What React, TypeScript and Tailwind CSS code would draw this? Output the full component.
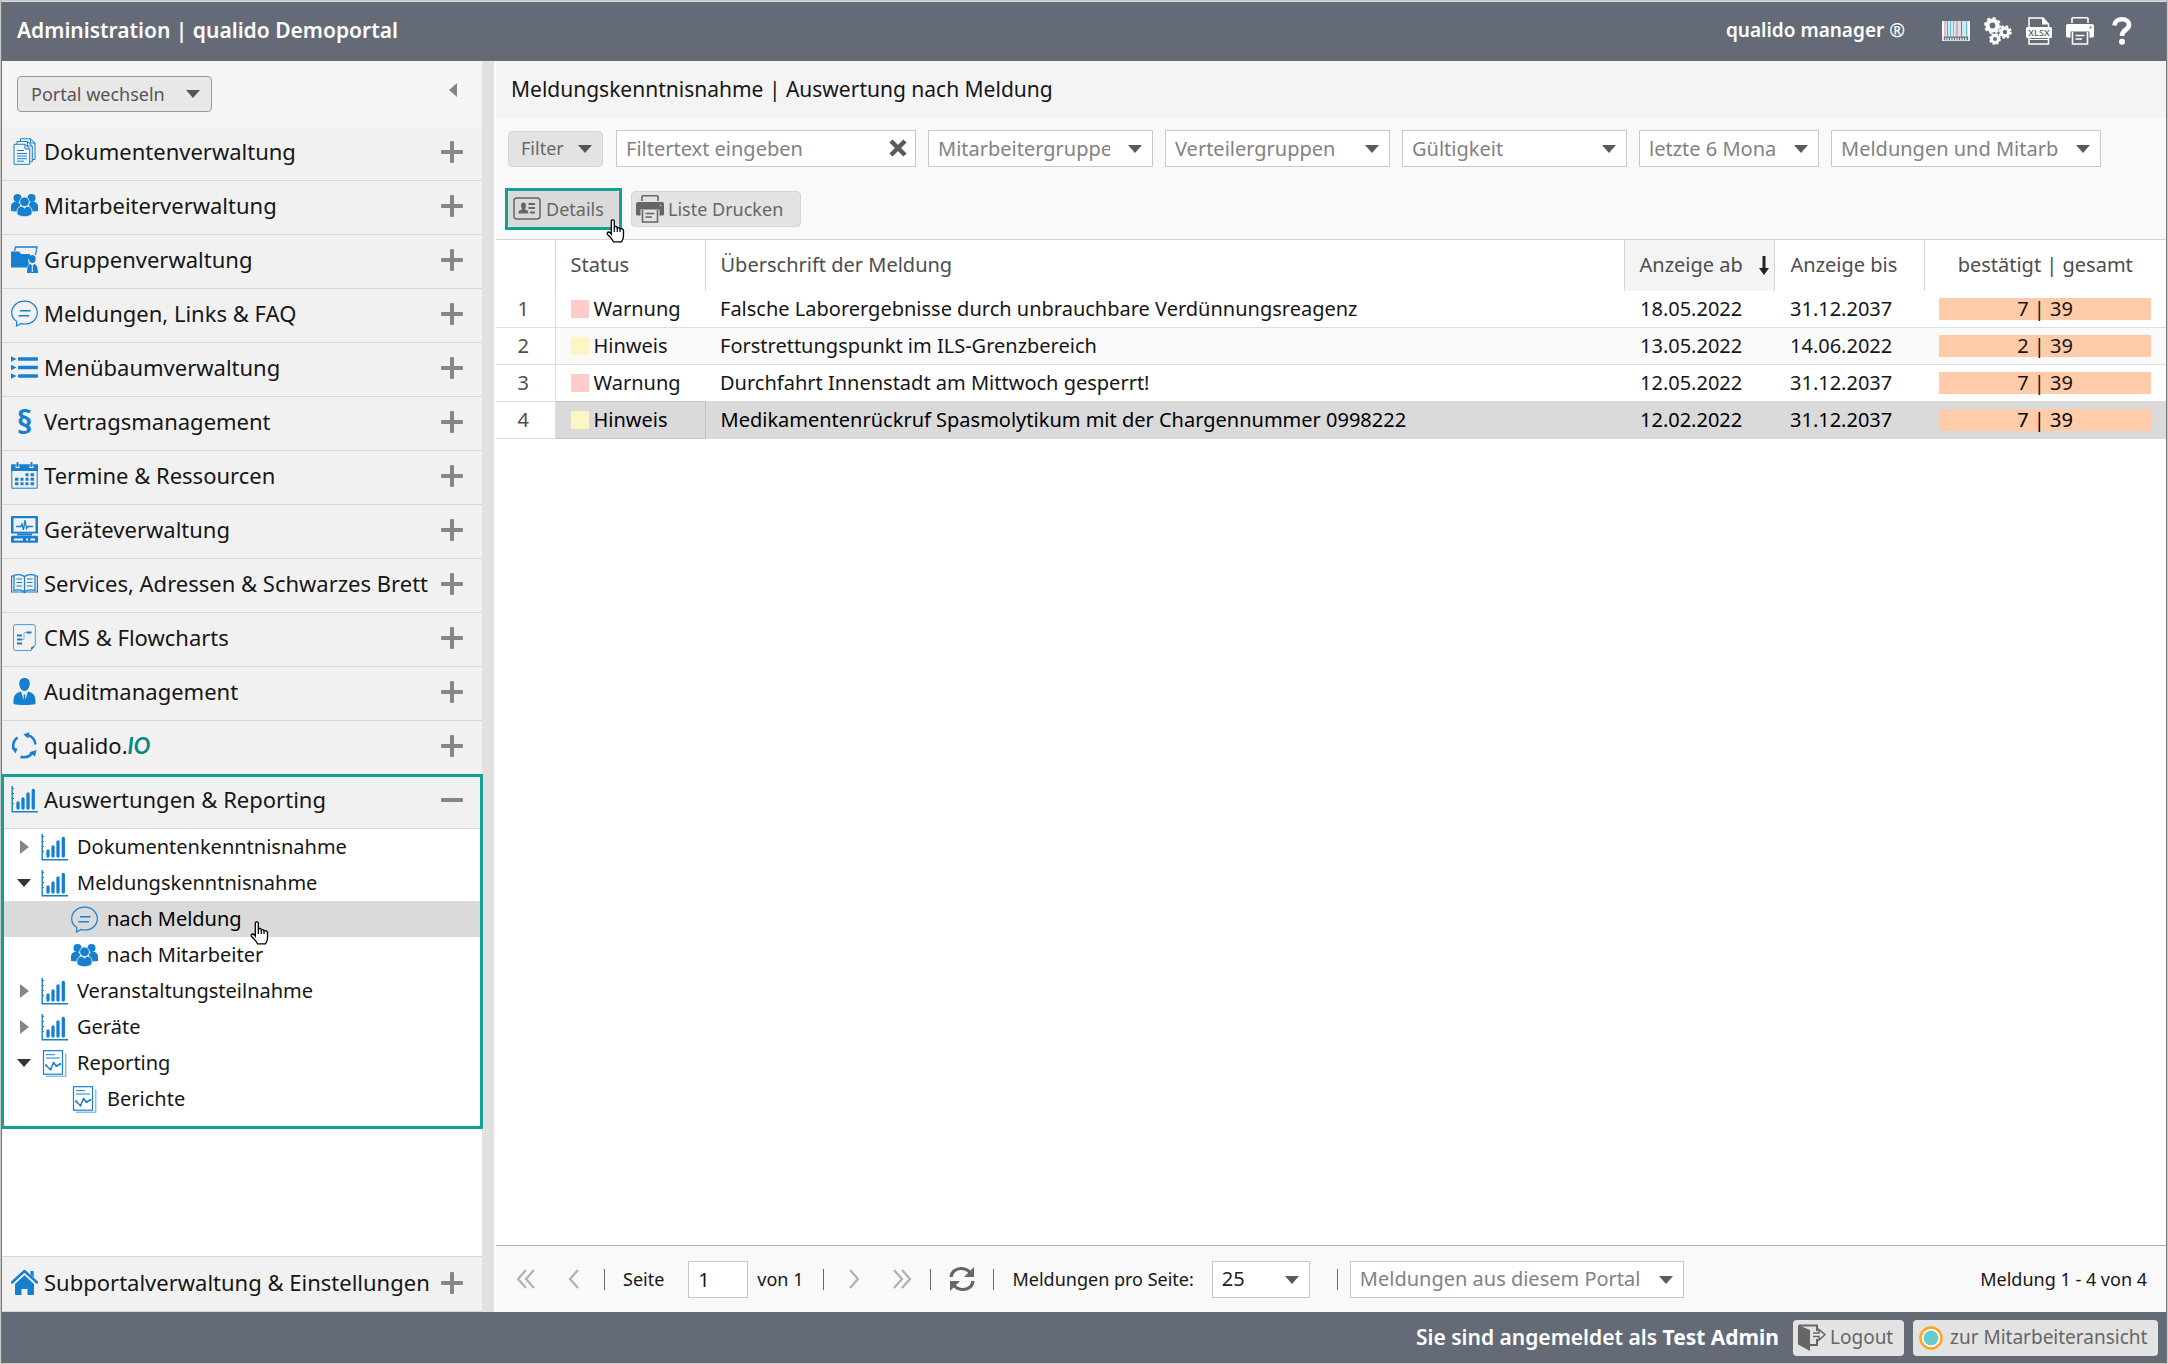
import React from 'react';

interface IconProps {
  className?: string
}

interface MenuEntry {
  label: React.ReactNode
  icon: React.ReactNode
}

interface TreeEntry {
  label: string
  icon: React.ReactNode
  state?: 'open' | 'closed'
  child?: boolean
  active?: boolean
}

const BLUE = '#177fd0'

function Svg({ children, size = 27 }: { children: React.ReactNode, size?: number }) {
  return (
    <svg width={size} height={size} viewBox="0 0 27 27" fill="none" stroke={BLUE} strokeWidth="1" className="shrink-0" aria-hidden="true">
      {children}
    </svg>
  )
}

function DocsIcon() {
  return (
    <Svg>
      <path d="M9.500 3.500V.800H19.500L24 5V21.500H21.500" />
      <path d="M6 6V3.500H16.500L21.300 8V23.700H19" />
      <path d="M19.500.800V5H24M16.500 3.500V8H21" />
      <path d="M3 6.300H14L18.700 11V26.300H3Z" fill="#f1f7fd" />
      <path d="M14 6.300V11H18.700M6 12.500H13M6 15.500H16M6 18H16M6 20.700H16M6 23.200H13" />
    </Svg>
  )
}

function UsersIcon() {
  return (
    <Svg>
      <g fill={BLUE} stroke="none">
        <circle cx="6.500" cy="6" r="4" />
        <circle cx="20.500" cy="6" r="4" />
        <path d="M0 19V14.500C0 11.500 2.500 9.800 5 9.800C7.500 9.800 8.500 11 9 12L8 19.800Z" />
        <path d="M27 19V14.500C27 11.500 24.500 9.800 22 9.800C19.500 9.800 18.500 11 18 12L19 19.800Z" />
      </g>
      <circle cx="13.500" cy="9.800" r="4.800" fill={BLUE} stroke="#f1f1f1" strokeWidth=".8" />
      <path d="M6 22V19C6 15.300 9.500 14.200 11 14.200L13.500 16L16 14.200C17.500 14.200 21 15.300 21 19V22C18 25.600 9 25.600 6 22Z" fill={BLUE} stroke="#f1f1f1" strokeWidth=".8" />
    </Svg>
  )
}

function GroupIcon() {
  return (
    <Svg>
      <path d="M3.500 5L4.500 1H26L24.500 9" strokeWidth="1.300" />
      <path d="M0 5.500H8L10 8H19V12L17 14L18 18L16 21.500H0Z" fill={BLUE} stroke="none" />
      <ellipse cx="21.300" cy="13" rx="3.300" ry="4" fill={BLUE} stroke="none" />
      <path d="M16 27C16 21 17.500 18.500 19.500 18L21.300 20L23.300 18C25.500 18.500 27 21 27 27Z" fill={BLUE} stroke="none" />
      <path d="M21.300 19.500V26" stroke="#f1f1f1" />
    </Svg>
  )
}

function SpeechIcon() {
  return (
    <Svg>
      <path d="M5.500 26L5.800 21.500C2.500 19.500.700 16.500.700 12.800C.700 6 6.300 1.200 13.500 1.200S26.300 6 26.300 12.800S20.500 24 13.500 24C12.300 24 11.200 23.800 10.200 23.500Z" strokeWidth="1.200" />
      <path d="M9 10.700H19.500M7.500 15.700H18" strokeWidth="1.500" />
    </Svg>
  )
}

function ListIcon() {
  return (
    <Svg>
      <g fill={BLUE} stroke="none">
        <path d="M0 2.300L5.500 5L0 7.700ZM0 10.800L5.500 13.500L0 16.200ZM0 19.300L5.500 22L0 24.700Z" />
        <rect x="7" y="3.300" width="20" height="3.400" rx="1" />
        <rect x="7" y="11.800" width="20" height="3.400" rx="1" />
        <rect x="7" y="20.300" width="20" height="3.400" rx="1" />
      </g>
    </Svg>
  )
}

function ParagraphIcon() {
  return <span className="w-[27px] shrink-0 text-center text-[32px] leading-[27px] font-bold text-[#177fd0]" aria-hidden="true">§</span>
}

function CalendarIcon() {
  return (
    <Svg>
      <path d="M.800 3H26.200V26.200H.800Z" />
      <path d="M0 2.500H4.500V6H8.500V2.500H18.500V6H22.500V2.500H27V9H0Z" fill={BLUE} stroke="none" />
      <path d="M6.500 0V5M20.500 0V5" strokeWidth="1.800" />
      <path d="M14.500 12.700H17.500M19.500 12.700H23M4 17.200H7.500M9.500 17.200H12.500M14.500 17.200H17.500M19.500 17.200H23M4 21.700H7.500M9.500 21.700H12.500M14.500 21.700H17.500M19.500 21.700H23" strokeWidth="3" />
    </Svg>
  )
}

function DeviceIcon() {
  return (
    <Svg>
      <path d="M0 1Q0 0 1 0H26Q27 0 27 1V17.500H0Z" fill={BLUE} stroke="none" />
      <rect x="2.500" y="2.200" width="22" height="13.500" fill="#f1f1f1" stroke="none" />
      <path d="M5 10.500H9.500L11 8L12.500 14L14 4L15.500 12.500L17 10.500H22" strokeWidth="1.300" />
      <path d="M6 18.500H21" strokeWidth="2" />
      <rect x="0" y="19.800" width="27" height="7" rx="1" fill={BLUE} stroke="none" />
      <path d="M3 23.500H12M15 23.500H17M19.500 23.500H24" stroke="#f1f1f1" strokeWidth="2" />
    </Svg>
  )
}

function BookIcon() {
  return (
    <Svg>
      <path d="M3 6H.600V22H12L13.500 22.500L15 22H26.400V6H24" strokeWidth="1.200" />
      <path d="M13.500 6.500C10.500 4.200 6.500 4.200 3 5.200V20.500C6.500 19.500 10.500 19.800 13.500 21.500C16.500 19.800 20.500 19.500 24 20.500V5.200C20.500 4.200 16.500 4.200 13.500 6.500ZM13.500 6.500V21.500" strokeWidth="1.200" />
      <path d="M5.500 9H11M5.500 12.500H11M5.500 16H11M16 9H21.500M16 12.500H21.500M16 16H21.500" />
    </Svg>
  )
}

function FlowIcon() {
  return (
    <Svg>
      <path d="M24.300 21V2.500Q24.300.600 22 .600H4.500Q2.500.600 2.500 2.500V24.500Q2.500 26.500 4.500 26.500H20Z" strokeOpacity=".75" />
      <path d="M20 26.500V24Q20 22.500 22 22.500L24.300 21Z" fill={BLUE} stroke="none" />
      <path d="M6 11.500H11M6 15.500H11M6 19.500H11M15.500 8.500H20.500" strokeWidth="1.800" />
      <path d="M11 15.500H13V8.500H15.500" strokeOpacity=".5" />
    </Svg>
  )
}

function AuditIcon() {
  return (
    <Svg>
      <path d="M8.300 5.500C8.300 1.500 10.500 0 13.500 0S18.700 1.500 18.700 5.500C18.700 9 17 13 13.500 13S8.300 9 8.300 5.500Z" fill={BLUE} stroke="none" />
      <path d="M2.500 26C2.500 19 2.500 16 9.500 13.500L13.500 17L17.500 13.500C24.500 16 24.500 19 24.500 26C20 27.300 7 27.300 2.500 26Z" fill={BLUE} stroke="none" />
      <path d="M10.200 14L13.500 25L16.800 14L13.500 16.500Z" fill="#f1f1f1" stroke="none" />
      <path d="M12.500 16.500H14.500L14.200 18.500L15 23L13.500 25L12 23L12.800 18.500Z" fill={BLUE} stroke="none" />
    </Svg>
  )
}

function CycleIcon() {
  return (
    <Svg>
      <path d="M6.500 5.500C3 8 1.500 11.500 2.500 17M16 3C20.500 4 24 7.500 24.500 12.500M22 20C19 24.500 14 26 9.500 24.700" strokeWidth="2.600" />
      <path d="M.300 15.500L6.500 16.500L4.500 21.500ZM18.500.300L17 6.500L12.300 2.300ZM18.500 20.500L25.500 18L24 24.500Z" fill={BLUE} stroke="none" />
    </Svg>
  )
}

function ChartIcon() {
  return (
    <Svg>
      <path d="M1.200 0V25.800H27" strokeWidth="1.400" />
      <path d="M1.500 2.500H3M1.500 7.500H3M1.500 12.500H3M1.500 17.500H3" />
      <path d="M7 17V22M12 13V22M17 8V22M22.300 4.500V22" strokeWidth="3.300" strokeLinecap="round" />
    </Svg>
  )
}

function ReportIcon() {
  return (
    <Svg>
      <path d="M24.700 3.500V26.300H5" strokeOpacity=".5" strokeWidth="1.500" />
      <rect x="2.500" y=".700" width="19" height="23.500" fill="#fff" strokeWidth="1.200" />
      <path d="M5 4.700H14M5 8H19" />
      <path d="M5 15.500L9.500 19.500L12.500 12.800L15.500 16L19.500 14" strokeWidth="1.500" />
      <path d="M4.200 15.200H6.200M8.500 19.200H10.500M11.700 13.200H13.700M14.500 15.800H16.500M18 14H20" strokeWidth="2" />
    </Svg>
  )
}

function HomeIcon() {
  return (
    <Svg>
      <path d="M1 13.500L13.500 2L26 13.500" strokeWidth="2.400" strokeLinecap="round" strokeLinejoin="round" />
      <path d="M19.500 2H22.700V8.500L19.500 5.700Z" fill={BLUE} stroke="none" />
      <path d="M13.500 6.300L23 15V25Q23 26 22 26H16.500V20H10.500V26H5Q4 26 4 25V15Z" fill={BLUE} stroke="none" />
    </Svg>
  )
}

function BarcodeIcon() {
  return (
    <svg width="28" height="20" viewBox="0 0 28 20" stroke="#fff" aria-hidden="true">
      <rect x="0" y="0" width="28" height="15.500" fill="#fff" fillOpacity=".8" stroke="none" />
      <path d="M1 0V20M27 0V20" strokeWidth="1.600" />
      <path d="M5.500 0V15.500M15 0V15.500" stroke="#9a8f9a" />
      <path d="M3 0V15.500M11.500 0V15.500" stroke="#c9a4a4" />
      <path d="M8.500 0V15.500M24.500 0V15.500" stroke="#5cc3e0" />
      <path d="M19.500 0V15.500" stroke="#a35cc8" />
      <path d="M3 18H25" strokeWidth="2.600" strokeDasharray="1.500 1" strokeOpacity=".8" />
      <path d="M1 19.500H27" strokeOpacity=".7" />
    </svg>
  )
}

function GearsIcon() {
  return (
    <svg width="28" height="28" viewBox="0 0 28 28" fill="none" stroke="#fff" aria-hidden="true">
      <circle cx="8.500" cy="8.500" r="5" strokeWidth="4.200" />
      <circle cx="8.500" cy="8.500" r="7.400" strokeWidth="2.200" strokeDasharray="3 2.811" />
      <circle cx="21" cy="15" r="3.800" strokeWidth="3.200" />
      <circle cx="21" cy="15" r="5.800" strokeWidth="2" strokeDasharray="2.500 2.055" />
      <circle cx="11" cy="22" r="3.400" strokeWidth="3" />
      <circle cx="11" cy="22" r="5" strokeWidth="1.800" strokeDasharray="2.200 1.727" />
    </svg>
  )
}

function XlsxIcon() {
  return (
    <svg width="26" height="28" viewBox="0 0 26 28" fill="none" stroke="#fff" aria-hidden="true">
      <path d="M3 11V1H17L22.500 7V11M3 19V27H22.500V19" strokeWidth="1.500" />
      <path d="M16 0L23 7.500H16Z" fill="#fff" stroke="none" />
      <rect x="0" y="10" width="26" height="11" rx="1.500" fill="#fff" stroke="none" />
      <path d="M4 22.500H22" strokeWidth="1" />
      <text x="13" y="18.800" textAnchor="middle" fontSize="9" fontWeight="600" fill="#646b77" stroke="none">XLSX</text>
    </svg>
  )
}

function PrinterIcon({ className }: IconProps) {
  return (
    <svg width="28" height="28" viewBox="0 0 28 28" fill="none" stroke="currentColor" className={className} aria-hidden="true">
      <path d="M6 6V1.500Q6 .800 7 .800H21Q22 .800 22 1.500V6" strokeWidth="1.600" />
      <path d="M2 7H26Q28 7 28 9V19Q28 20.500 26.500 20.500H23.500V14.500H4.500V20.500H1.500Q0 20.500 0 19V9Q0 7 2 7Z" fill="currentColor" stroke="none" />
      <path d="M6.500 15V27H21.500V15" strokeWidth="1.600" />
      <path d="M9.500 18.500H18.500M9.500 22H16" strokeWidth="1.600" />
      <circle cx="24.500" cy="10.500" r="1.200" fill="#999" stroke="none" />
    </svg>
  )
}

function CardIcon() {
  return (
    <svg width="28" height="24" viewBox="0 0 28 24" fill="none" stroke="#666" aria-hidden="true">
      <rect x="1" y="1" width="26" height="21" rx="3" strokeWidth="1.500" />
      <path d="M8 8.500C8 6.500 9 5.500 10.500 5.500S13 6.500 13 8.500C13 10.500 12 11 12 12.500C14 13 15.500 13.500 15.500 16.500H5.500C5.500 13.500 7 13 9 12.500C9 11 8 10.500 8 8.500Z" fill="#666" stroke="none" />
      <path d="M15.500 7H22M15.500 11H22M17 15.500H22" strokeWidth="2" />
    </svg>
  )
}

function LogoutIcon() {
  return (
    <svg width="28" height="28" viewBox="0 0 28 28" fill="none" stroke="#666" aria-hidden="true">
      <path d="M0 1L12 6V27L0 20.500Z" fill="#666" stroke="none" />
      <path d="M1 1.500H19V7M12 21H19V15" strokeWidth="2" />
      <path d="M15 9H21V5.500L27 10.700L21 16V12.500H15" strokeWidth="1.500" />
    </svg>
  )
}

function RefreshIcon() {
  return (
    <svg width="26" height="26" viewBox="0 0 26 26" fill="none" stroke="#666" aria-hidden="true">
      <path d="M2 11C2.500 5.500 7 2.500 12 2.500C16 2.500 19 4 21.500 7M24 15C23.500 20.500 19 23.500 14 23.500C10 23.500 7 22 4.500 19" strokeWidth="3.200" />
      <path d="M25 1V11H15ZM1 25V15H11Z" fill="#666" stroke="none" />
    </svg>
  )
}

function HandCursor({ className }: IconProps) {
  return (
    <svg width="19" height="24" viewBox="0 0 19 24" className={className} aria-hidden="true">
      <path d="M6 1Q8 .500 8.300 2V9L9 7.500Q11 7 11.300 9Q13.500 8 14 10Q17 9 17.500 11.500V17Q17.500 20 15.500 22.800H7.500Q6 19.500 1.500 15.500Q.500 13.500 2.500 13Q4 13 5.300 15V2Q5.300 1.200 6 1Z" fill="#fff" stroke="#000" strokeWidth="1.300" />
      <path d="M8.300 9V13M11.300 9V13M14 10V13" stroke="#000" strokeWidth="1.200" />
    </svg>
  )
}

function Caret({ className }: IconProps) {
  return (
    <svg width="14" height="8" viewBox="0 0 14 8" className={className} aria-hidden="true">
      <path d="M0 0H14L7 8Z" fill="currentColor" />
    </svg>
  )
}

const menu: Array<MenuEntry> = [
  { label: 'Dokumentenverwaltung', icon: <DocsIcon /> },
  { label: 'Mitarbeiterverwaltung', icon: <UsersIcon /> },
  { label: 'Gruppenverwaltung', icon: <GroupIcon /> },
  { label: 'Meldungen, Links & FAQ', icon: <SpeechIcon /> },
  { label: 'Menübaumverwaltung', icon: <ListIcon /> },
  { label: 'Vertragsmanagement', icon: <ParagraphIcon /> },
  { label: 'Termine & Ressourcen', icon: <CalendarIcon /> },
  { label: 'Geräteverwaltung', icon: <DeviceIcon /> },
  { label: 'Services, Adressen & Schwarzes Brett', icon: <BookIcon /> },
  { label: 'CMS & Flowcharts', icon: <FlowIcon /> },
  { label: 'Auditmanagement', icon: <AuditIcon /> },
  { label: <>qualido.<span className="font-[Lato] font-bold text-[#088683] italic">IO</span></>, icon: <CycleIcon /> },
]

const tree: Array<TreeEntry> = [
  { label: 'Dokumentenkenntnisnahme', icon: <ChartIcon />, state: 'closed' },
  { label: 'Meldungskenntnisnahme', icon: <ChartIcon />, state: 'open' },
  { label: 'nach Meldung', icon: <SpeechIcon />, child: true, active: true },
  { label: 'nach Mitarbeiter', icon: <UsersIcon />, child: true },
  { label: 'Veranstaltungsteilnahme', icon: <ChartIcon />, state: 'closed' },
  { label: 'Geräte', icon: <ChartIcon />, state: 'closed' },
  { label: 'Reporting', icon: <ReportIcon />, state: 'open' },
  { label: 'Berichte', icon: <ReportIcon />, child: true },
]

const rows = [
  { status: 'Warnung', title: 'Falsche Laborergebnisse durch unbrauchbare Verdünnungsreagenz', from: '18.05.2022', to: '31.12.2037', count: '7 | 39' },
  { status: 'Hinweis', title: 'Forstrettungspunkt im ILS-Grenzbereich', from: '13.05.2022', to: '14.06.2022', count: '2 | 39' },
  { status: 'Warnung', title: 'Durchfahrt Innenstadt am Mittwoch gesperrt!', from: '12.05.2022', to: '31.12.2037', count: '7 | 39' },
  { status: 'Hinweis', title: 'Medikamentenrückruf Spasmolytikum mit der Chargennummer 0998222', from: '12.02.2022', to: '31.12.2037', count: '7 | 39', selected: true },
]

function MenuRow({ label, icon, open }: MenuEntry & { open?: boolean }) {
  return (
    <button className="flex h-[54px] w-full items-center border-b border-[#d8d8d8] bg-[#f1f1f1] pr-[19px] pb-1 pl-[9px] text-left text-[22px] text-[#161616]">
      {icon}
      <span className="ml-[6px] flex-1 whitespace-nowrap">{label}</span>
      <svg width="22" height="22" viewBox="0 0 22 22" fill="#868686" aria-hidden="true">
        <rect x="0" y="9" width="22" height="4" rx="1" />
        {!open && <rect x="9" y="0" width="4" height="22" rx="1" />}
      </svg>
    </button>
  )
}

function TreeRow({ label, icon, state, child, active }: TreeEntry) {
  return (
    <li className={active ? 'relative bg-[#dadada]' : ''}>
      <button className={`flex h-9 w-full items-center text-left text-[20px] ${active ? 'text-black' : 'text-[#161616]'} ${child ? 'pl-[69px]' : 'pl-[15px]'}`}>
        {!child && (
          <span className="flex w-6 shrink-0">
            {state === 'open'
              ? <Caret className="text-[#333]" />
              : <svg width="9" height="14" viewBox="0 0 9 14" className="ml-[3px]" aria-hidden="true"><path d="M0 0L9 7L0 14Z" fill="#868686" /></svg>}
          </span>
        )}
        {icon}
        <span className="ml-[9px] whitespace-nowrap">{label}</span>
      </button>
      {active && <HandCursor className="absolute top-5 left-[248px]" />}
    </li>
  )
}

function Sidebar() {
  return (
    <aside className="flex w-[480px] shrink-0 flex-col bg-white">
      <div className="flex h-[66px] items-start justify-between bg-[#f5f5f5] pt-[15px] pr-[25px] pl-[15px]">
        <button className="flex h-9 w-[195px] items-center justify-between rounded-[4px] border border-[#999] bg-[#e8e8e8] pr-[11px] pl-[13px] text-[18px] text-[#555]">
          Portal wechseln
          <Caret />
        </button>
        <button aria-label="Menü einklappen" className="mt-[7px]">
          <svg width="8" height="14" viewBox="0 0 8 14" aria-hidden="true"><path d="M8 0V14L0 7Z" fill="#868686" /></svg>
        </button>
      </div>
      <nav>
        {menu.map((m, i) => <MenuRow key={i} {...m} />)}
        <section className="relative z-10 pb-[11px]">
          <MenuRow label="Auswertungen & Reporting" icon={<ChartIcon />} open />
          <ul>
            {tree.map((t, i) => <TreeRow key={i} {...t} />)}
          </ul>
          <div className="pointer-events-none absolute -inset-px border-3 border-[#12a090]"></div>
        </section>
      </nav>
      <div className="mt-auto border-t border-[#d8d8d8] bg-[#f1f1f1] pt-px">
        <MenuRow label="Subportalverwaltung & Einstellungen" icon={<HomeIcon />} />
      </div>
    </aside>
  )
}

interface DropdownProps {
  label: string
  value: string
  width: string
  dark?: boolean
}

function Dropdown({ label, value, width, dark }: DropdownProps) {
  return (
    <div className={`relative shrink-0 ${width}`}>
      <select aria-label={label} className={`h-[37px] w-full appearance-none border border-[#c8c8c8] bg-white pr-[42px] pl-[9px] text-[20px] ${dark ? 'text-[#222]' : 'text-[#828282]'}`}>
        <option>{value}</option>
      </select>
      <Caret className="pointer-events-none absolute top-[15px] right-[11px] text-[#5a5a5a]" />
    </div>
  )
}

function Toolbar() {
  return (
    <div className="bg-[#f9f9f9] px-3 pt-3">
      <div className="flex items-center gap-3">
        <button className="flex h-9 w-[95px] items-center justify-between rounded-[4px] border border-[#d5d5d5] bg-[#e3e3e3] pr-[10px] pl-3 text-[18px] text-[#666]">
          Filter
          <Caret className="text-[#555]" />
        </button>
        <div className="relative ml-px w-[300px] shrink-0">
          <input aria-label="Filtertext" placeholder="Filtertext eingeben" className="h-[37px] w-full border border-[#c8c8c8] bg-white pr-10 pl-[9px] text-[20px] placeholder:text-[#828282]" />
          <button aria-label="Filtertext löschen" className="absolute top-[9px] right-[9px]">
            <svg width="18" height="18" viewBox="0 0 18 18" stroke="#5a5a5a" strokeWidth="4.500" aria-hidden="true"><path d="M2 2L16 16M16 2L2 16" /></svg>
          </button>
        </div>
        <Dropdown label="Mitarbeitergruppen" value="Mitarbeitergruppen" width="w-[225px]" />
        <Dropdown label="Verteilergruppen" value="Verteilergruppen" width="w-[225px]" />
        <Dropdown label="Gültigkeit" value="Gültigkeit" width="w-[225px]" />
        <Dropdown label="Zeitraum" value="letzte 6 Monate" width="w-[180px]" />
        <Dropdown label="Umfang" value="Meldungen und Mitarbeiter" width="w-[270px]" />
      </div>
      <div className="flex gap-3 pt-6 pb-3">
        <div className="relative outline-3 outline-[#12a090]">
          <button className="flex h-9 w-[111px] items-center gap-[5px] rounded-[4px] bg-[#dadada] pl-[5px] text-[18px] text-[#666]">
            <CardIcon />
            Details
          </button>
          <HandCursor className="absolute top-7 right-[-6px]" />
        </div>
        <button className="flex h-9 w-[170px] items-center gap-1 rounded-[4px] border border-[#d5d5d5] bg-[#e3e3e3] pl-1 text-[18px] text-[#666]">
          <PrinterIcon />
          Liste Drucken
        </button>
      </div>
    </div>
  )
}

function MessageTable() {
  return (
    <table className="w-full table-fixed border-collapse border-t border-[#d5d5d5] text-left text-[20px] text-[#161616]">
      <colgroup>
        <col className="w-[59px]" />
        <col className="w-[150px]" />
        <col />
        <col className="w-[150px]" />
        <col className="w-[150px]" />
        <col className="w-[242px]" />
      </colgroup>
      <thead className="text-[#4d4d4d]">
        <tr className="h-[51px]">
          <th className="border-r border-[#d5d5d5]" aria-label="Nummer"></th>
          <th className="border-r border-[#d5d5d5] pl-[15px] font-normal">Status</th>
          <th className="border-r border-[#d5d5d5] pl-[15px] font-normal">Überschrift der Meldung</th>
          <th className="border-r border-[#d5d5d5] bg-[#f4f4f4] pl-[15px] font-normal">
            <span className="flex items-center justify-between pr-[5px] whitespace-nowrap">
              Anzeige ab
              <svg width="10" height="19" viewBox="0 0 10 19" aria-hidden="true"><path d="M3.500 0H6.500V12H10L5 19L0 12H3.500Z" fill="#222" /></svg>
            </span>
          </th>
          <th className="border-r border-[#d5d5d5] pl-4 font-normal">Anzeige bis</th>
          <th className="text-center font-normal">bestätigt | gesamt</th>
        </tr>
      </thead>
      <tbody className="leading-7">
        {rows.map((r, i) => (
          <tr key={i} className={`h-[37px] border-b border-[#dedede] ${r.selected ? 'bg-[#dadada] text-black' : i % 2 ? 'bg-[#fafafa]' : 'bg-white'}`}>
            <td className="border-r border-[#dedede] bg-white pr-1 text-center text-[#4d4d4d]">{i + 1}</td>
            <td className={r.selected ? 'border border-[#c2c2c2] pl-[15px]' : 'pl-[15px]'}>
              <span className="flex items-center gap-[5px]">
                <span className={`h-[18px] w-[18px] ${r.status === 'Warnung' ? 'bg-[#ffcccc]' : 'bg-[#fbf6c4]'}`}></span>
                {r.status}
              </span>
            </td>
            <td className="truncate pl-[15px]">{r.title}</td>
            <td className="pl-4">{r.from}</td>
            <td className="pl-4">{r.to}</td>
            <td className="px-[15px]">
              <div className="h-[22px] bg-[#ffcba8] text-center leading-[22px]">{r.count}</div>
            </td>
          </tr>
        ))}
      </tbody>
    </table>
  )
}

function Separator() {
  return <span className="h-[21px] w-px shrink-0 bg-[#666]"></span>
}

function PageButton({ label, path }: { label: string, path: string }) {
  return (
    <button aria-label={label} className="flex w-5 justify-center">
      <svg width="20" height="20" viewBox="0 0 20 20" fill="none" stroke="#b0b0b0" strokeWidth="2.200" aria-hidden="true">
        <path d={path} />
      </svg>
    </button>
  )
}

function Pager() {
  return (
    <div className="mt-auto flex h-[67px] items-center border-t border-[#b0b0b0] bg-[#f9f9f9] pr-[19px] pl-5 text-[18px] whitespace-nowrap text-[#161616]">
      <div className="flex items-center gap-7">
        <PageButton label="Erste Seite" path="M10 1L2 10L10 19M18 1L10 10L18 19" />
        <PageButton label="Vorherige Seite" path="M14 1L6 10L14 19" />
      </div>
      <div className="ml-5 flex items-center gap-[18px]">
        <Separator />
        <label htmlFor="page">Seite</label>
      </div>
      <input id="page" defaultValue="1" className="ml-6 h-[37px] w-[60px] border border-[#c8c8c8] bg-white pl-[9px] text-[20px]" />
      <span className="ml-[9px]">von 1</span>
      <div className="ml-5 flex items-center gap-5">
        <Separator />
        <PageButton label="Nächste Seite" path="M6 1L14 10L6 19" />
      </div>
      <div className="ml-7 flex items-center gap-[18px]">
        <PageButton label="Letzte Seite" path="M2 1L10 10L2 19M10 1L18 10L10 19" />
        <Separator />
        <button aria-label="Aktualisieren"><RefreshIcon /></button>
        <Separator />
        <span>Meldungen pro Seite:</span>
        <Dropdown label="Meldungen pro Seite" value="25" width="w-[98px]" dark />
      </div>
      <div className="ml-[27px] flex items-center gap-3">
        <Separator />
        <Dropdown label="Portal" value="Meldungen aus diesem Portal" width="w-[334px]" />
      </div>
      <span className="ml-auto">Meldung 1 - 4 von 4</span>
    </div>
  )
}

function App() {
  return (
    <div className="flex h-screen flex-col border border-[#c8c8c8] font-['Noto_Sans',sans-serif]">
      <div className="flex min-h-0 flex-1 flex-col border-x border-t border-x-[#777] border-t-[#ddd]">
        <header className="flex h-[59px] shrink-0 items-center justify-between bg-[#646b77] pr-[30px] pb-[2px] pl-[15px] font-semibold text-white">
          <h1 className="text-[21px]">Administration | qualido Demoportal</h1>
          <div className="flex items-center">
            <span className="mr-[37px] text-[19px]">qualido manager ®</span>
            <div className="flex items-center gap-[14px]">
              <button aria-label="Barcode"><BarcodeIcon /></button>
              <button aria-label="Einstellungen"><GearsIcon /></button>
              <button aria-label="XLSX Export"><XlsxIcon /></button>
              <button aria-label="Drucken"><PrinterIcon /></button>
              <button aria-label="Hilfe">
                <svg width="28" height="28" viewBox="0 0 28 28" fill="none" stroke="#fff" aria-hidden="true">
                  <path d="M6.500 8.500C7 4.500 10 2.300 14 2.300C18 2.300 21 4.500 21 8C21 13 14 12.500 14 19" strokeWidth="4.600" />
                  <circle cx="14" cy="24.700" r="3" fill="#fff" stroke="none" />
                </svg>
              </button>
            </div>
          </div>
        </header>
        <div className="flex min-h-0 flex-1">
          <Sidebar />
          <div className="w-3 shrink-0 bg-[#e1e1e1]"></div>
          <main className="ml-[2px] flex min-w-0 flex-1 flex-col bg-white">
            <h2 className="flex h-[57px] items-center bg-[#f4f4f4] px-[15px] text-[21px] text-[#161616]">Meldungskenntnisnahme | Auswertung nach Meldung</h2>
            <Toolbar />
            <MessageTable />
            <Pager />
          </main>
        </div>
        <footer className="flex h-[51px] shrink-0 items-center justify-end bg-[#646b77] pr-2 text-[21px] font-semibold text-white">
          <span>Sie sind angemeldet als <b className="font-bold">Test Admin</b></span>
          <button className="ml-[14px] flex h-9 w-[111px] items-center gap-1 rounded-[4px] bg-[#e3e3e3] pl-[5px] text-[19px] font-normal text-[#666]">
            <LogoutIcon />
            Logout
          </button>
          <button className="ml-[9px] flex h-9 w-[245px] items-center gap-[7px] rounded-[4px] bg-[#e3e3e3] pl-[6px] text-[19px] font-normal text-[#666]">
            <svg width="24" height="24" viewBox="0 0 24 24" aria-hidden="true">
              <circle cx="12" cy="12" r="10.500" fill="#fff" stroke="#ffa321" strokeWidth="2.500" />
              <circle cx="12" cy="12" r="7.500" fill="#66cdcc" />
            </svg>
            zur Mitarbeiteransicht
          </button>
        </footer>
      </div>
    </div>
  );
}

export default App;
